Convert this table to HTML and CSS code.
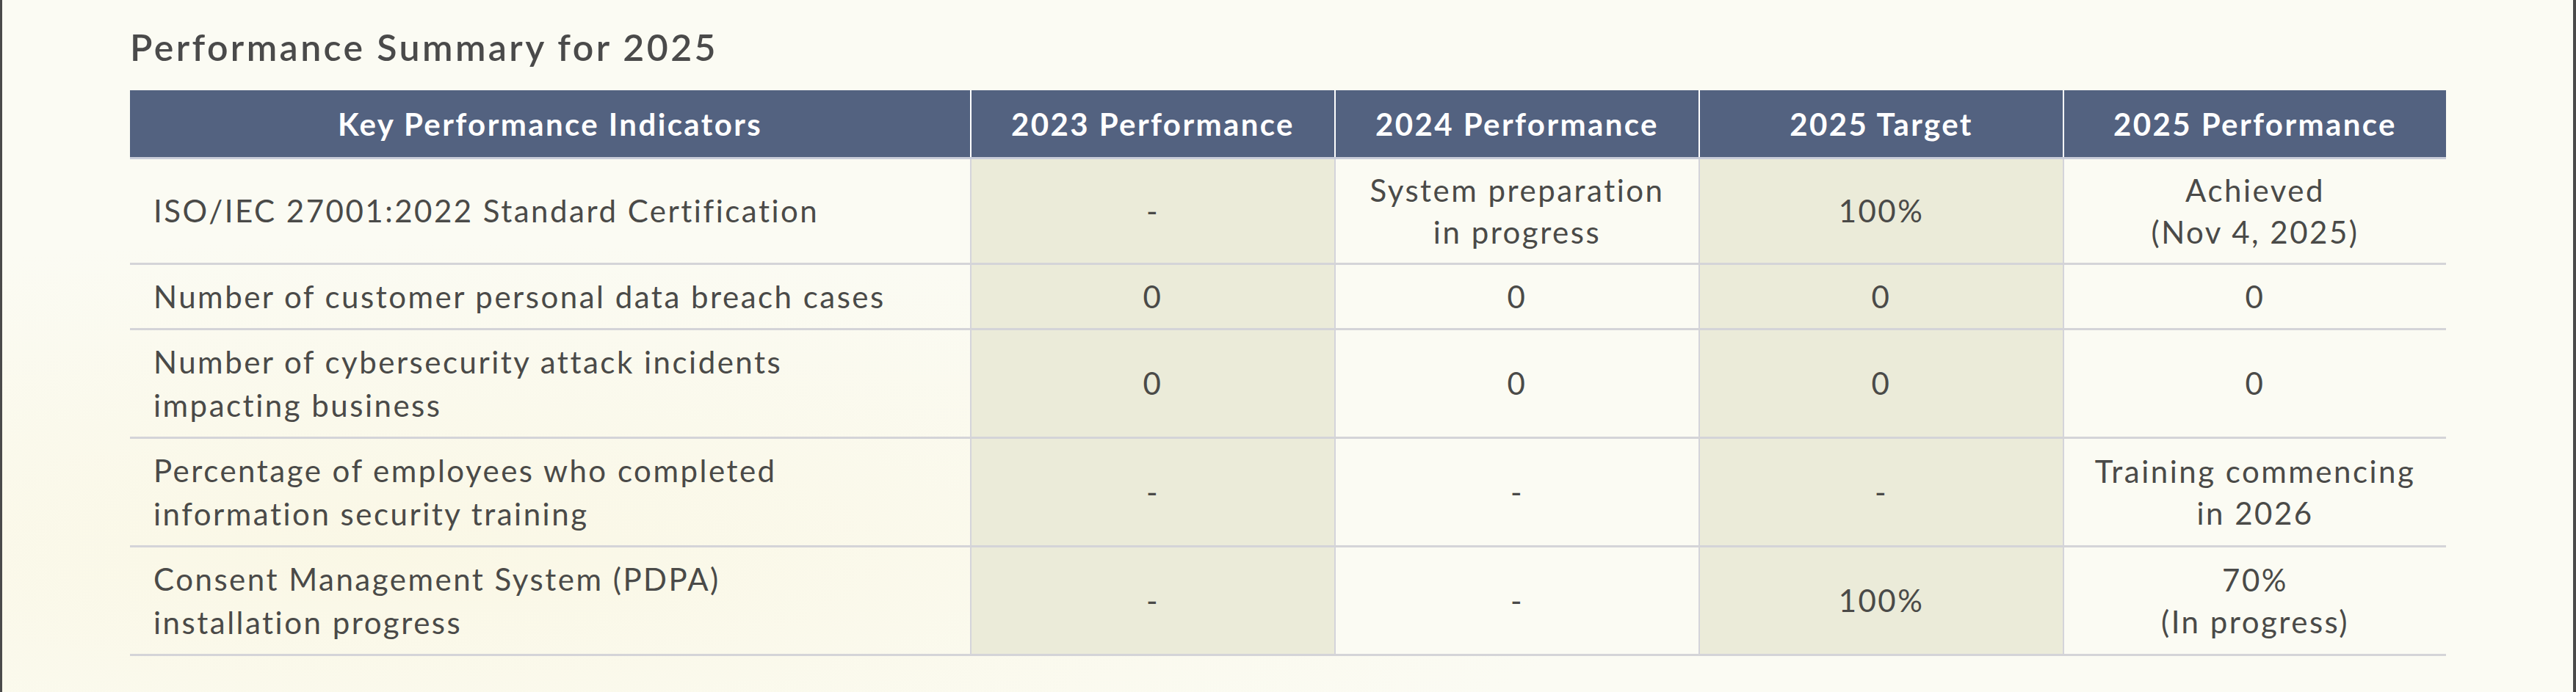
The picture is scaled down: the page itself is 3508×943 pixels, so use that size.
FILE: index.html
```html
<!DOCTYPE html>
<html lang="en">
<head>
<meta charset="utf-8">
<title>Performance Summary for 2025</title>
<link rel="stylesheet" href="styles.css">
</head>
<body>
<div class="frame">
  <h2 class="title">Performance Summary for 2025</h2>
  <table class="kpi">
    <colgroup>
      <col class="c-kpi">
      <col class="c-num">
      <col class="c-num">
      <col class="c-num">
      <col class="c-last">
    </colgroup>
    <thead>
      <tr>
        <th>Key Performance Indicators</th>
        <th>2023 Performance</th>
        <th>2024 Performance</th>
        <th>2025 Target</th>
        <th>2025 Performance</th>
      </tr>
    </thead>
    <tbody>
      <tr>
        <td class="name">ISO/IEC 27001:2022 Standard Certification</td>
        <td class="shade">-</td>
        <td>System preparation<br>in progress</td>
        <td class="shade">100%</td>
        <td>Achieved<br>(Nov 4, 2025)</td>
      </tr>
      <tr>
        <td class="name">Number of customer personal data breach cases</td>
        <td class="shade">0</td>
        <td>0</td>
        <td class="shade">0</td>
        <td>0</td>
      </tr>
      <tr>
        <td class="name">Number of cybersecurity attack incidents<br>impacting business</td>
        <td class="shade">0</td>
        <td>0</td>
        <td class="shade">0</td>
        <td>0</td>
      </tr>
      <tr>
        <td class="name">Percentage of employees who completed<br>information security training</td>
        <td class="shade">-</td>
        <td>-</td>
        <td class="shade">-</td>
        <td>Training commencing<br>in 2026</td>
      </tr>
      <tr>
        <td class="name">Consent Management System (PDPA)<br>installation progress</td>
        <td class="shade">-</td>
        <td>-</td>
        <td class="shade">100%</td>
        <td>70%<br>(In progress)</td>
      </tr>
    </tbody>
  </table>
</div>
</body>
</html>
```

FILE: styles.css
```css
html, body {
  margin: 0;
  padding: 0;
  background: #fbfaf2;
}

.frame {
  box-sizing: border-box;
  width: 3508px;
  height: 943px;
  border-left: 3px solid #4a4a4a;
  border-right: 4px solid #4a4a4a;
  padding: 34px 0 0 174px;
  background:
    radial-gradient(ellipse at 15% 80%, rgba(250, 247, 228, 0.9), rgba(250, 247, 228, 0) 40%),
    #fbfbf3;
  font-family: Lato, "Open Sans", sans-serif;
  color: #4a4a48;
}

.title {
  margin: 0;
  font-size: 50px;
  line-height: 60px;
  font-weight: 600;
  letter-spacing: 3.4px;
  color: #4a4a4a;
}

.kpi {
  margin-top: 29px;
  width: 3154px;
  border-collapse: collapse;
  table-layout: fixed;
}

.c-kpi { width: 1145px; }
.c-num { width: 496px; }
.c-last { width: 521px; }

.kpi th {
  height: 91px;
  padding: 0;
  background: #536280;
  color: #ffffff;
  font-size: 42px;
  font-weight: 700;
  letter-spacing: 2.4px;
  text-align: center;
  border-left: 2px solid #ffffff;
  border-bottom: 3px solid #c9cdd9;
}

.kpi th:first-child { border-left: 0; }

.kpi td {
  padding: 13.5px 20px;
  font-size: 42px;
  line-height: 57px;
  letter-spacing: 2.5px;
  text-align: center;
  vertical-align: middle;
  border-left: 2px solid #d4d4da;
  border-bottom: 3px solid #d4d4d8;
  background: #fbfbf3;
}

.kpi td.name {
  text-align: left;
  padding-left: 32px;
  line-height: 59px;
  border-left: 0;
  background: transparent;
}

.kpi td.shade {
  background: #ebebd9;
}
```
